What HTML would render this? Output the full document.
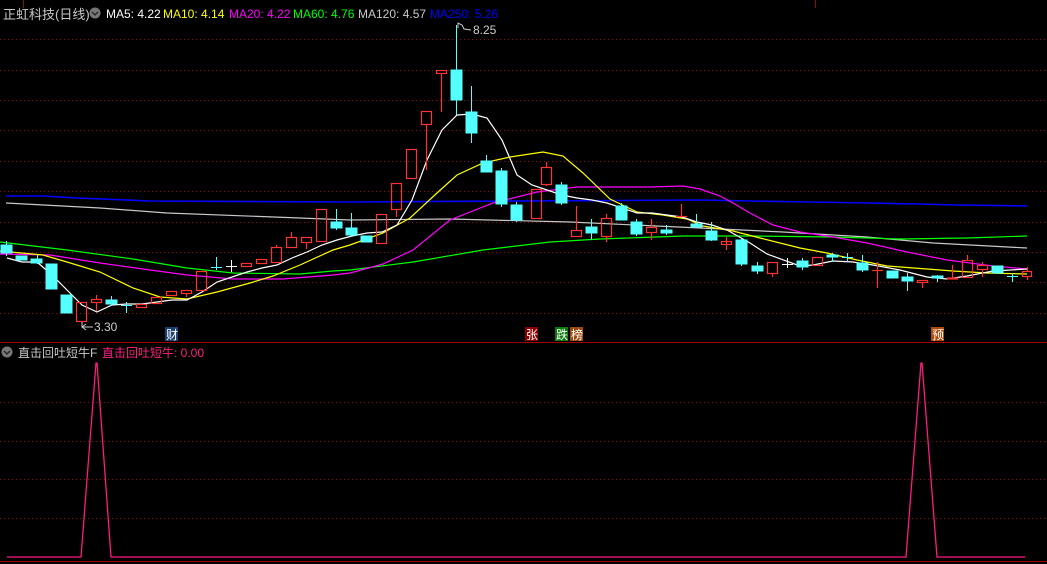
<!DOCTYPE html>
<html><head><meta charset="utf-8"><style>
html,body{margin:0;padding:0;background:#000;overflow:hidden}
svg{display:block}
text{font-family:"Liberation Sans","Noto Sans CJK SC",sans-serif}
</style></head><body>
<svg width="1047" height="564" viewBox="0 0 1047 564" xmlns="http://www.w3.org/2000/svg">
<rect width="1047" height="564" fill="#000"/>
<g stroke="#8a1010" stroke-width="1" stroke-dasharray="1,3">
<line x1="0" y1="39.5" x2="1047" y2="39.5"/>
<line x1="0" y1="70.5" x2="1047" y2="70.5"/>
<line x1="0" y1="100.5" x2="1047" y2="100.5"/>
<line x1="0" y1="130.5" x2="1047" y2="130.5"/>
<line x1="0" y1="161.5" x2="1047" y2="161.5"/>
<line x1="0" y1="191.5" x2="1047" y2="191.5"/>
<line x1="0" y1="222.5" x2="1047" y2="222.5"/>
<line x1="0" y1="252.5" x2="1047" y2="252.5"/>
<line x1="0" y1="282.5" x2="1047" y2="282.5"/>
<line x1="0" y1="313.5" x2="1047" y2="313.5"/>
<line x1="0" y1="402.5" x2="1047" y2="402.5"/>
<line x1="0" y1="441.5" x2="1047" y2="441.5"/>
<line x1="0" y1="479.5" x2="1047" y2="479.5"/>
<line x1="0" y1="518.5" x2="1047" y2="518.5"/>
</g>
<line x1="23.5" y1="0" x2="23.5" y2="8" stroke="#8a1010"/>
<line x1="815.5" y1="0" x2="815.5" y2="8" stroke="#8a1010"/>
<line x1="0" y1="342.5" x2="1047" y2="342.5" stroke="#a00000"/>
<line x1="0" y1="561.5" x2="1047" y2="561.5" stroke="#a00000"/>

<!-- MA lines -->
<g fill="none" stroke-width="1.2">
<polyline stroke="#0000ff" stroke-width="1.6" points="6,196 43,196 77,198 150,201 350,202 700,200 750,201 810,202 870,203 917,204 960,205 1027,206"/>
<polyline stroke="#c8c8c8" points="6,203 100,208 167,213 300,218 350,220 450,219 570,222 700,228 783,232 867,237 933,243 1027,248"/>
<polyline stroke="#00ff00" points="0,242 67,250 133,259 187,268 233,273 300,274 333,271 350,270 413,262 483,250 550,242 600,239 683,236 750,236 833,237 900,239 967,238 1027,236"/>
<polyline stroke="#ff00ff" points="0,254 50,255 100,263 150,270 187,275 233,279 283,279 333,275 350,273 383,264 413,250 450,220 493,203 537,192 577,187 650,187 683,186 700,189 720,196 733,203 750,213 773,225 800,232 833,237 867,243 907,252 947,260 993,266 1027,269"/>
<polyline stroke="#ffff00" points="0,251 43,255 67,262 100,272 133,288 160,297 187,299 217,292 250,283 273,276 300,265 333,250 350,245 383,233 410,218 437,193 457,175 483,163 510,157 543,152 563,156 583,173 610,199 637,212 663,215 687,219 703,226 733,231 760,238 800,248 827,253 857,260 887,266 927,269 953,271 987,273 1027,274"/>
<polyline stroke="#ffffff" points="7,258 22,262 37,262 52,275 67,290 82,305 97,312 112,305 127,304 142,304 157,302 172,300 187,300 202,292 217,282 232,277 247,272 262,268 277,265 292,258 307,252 322,245 337,240 352,236 367,233 382,232 397,225 412,200 427,160 442,130 457,115 472,114 487,118 502,140 517,175 532,185 547,190 562,195 577,198 592,200 607,203 622,208 637,213 652,213 667,215 682,217 697,222 712,225 727,230 750,243 767,254 800,266 813,265 833,261 853,262 873,265 900,270 927,277 947,279 967,276 993,271 1027,269"/>
</g>

<!-- candles: cyan filled -->
<g fill="#54ffff" stroke="#54ffff" stroke-width="1">
<line x1="6.5" y1="241" x2="6.5" y2="256"/><rect x="1" y="245" width="11" height="8"/>
<rect x="16" y="256" width="11" height="4"/>
<line x1="37.5" y1="255" x2="37.5" y2="264"/><rect x="31" y="259" width="11" height="4"/>
<rect x="46" y="264" width="11" height="25"/>
<rect x="61" y="295" width="11" height="18"/>
<line x1="111.5" y1="296" x2="111.5" y2="306"/><rect x="106" y="300" width="11" height="4"/>
<line x1="126.5" y1="302" x2="126.5" y2="313"/><line x1="121" y1="305.5" x2="132" y2="305.5"/>
<line x1="216.5" y1="257" x2="216.5" y2="270"/><line x1="211" y1="267.5" x2="222" y2="267.5"/>
<line x1="336.5" y1="209" x2="336.5" y2="230"/><rect x="331" y="222" width="11" height="6"/>
<line x1="351.5" y1="213" x2="351.5" y2="237"/><rect x="346" y="228" width="11" height="7"/>
<rect x="361" y="236" width="11" height="6"/>
<line x1="456.5" y1="25" x2="456.5" y2="115"/><rect x="451" y="70" width="11" height="30"/>
<line x1="471.5" y1="86" x2="471.5" y2="143"/><rect x="466" y="112" width="11" height="21"/>
<line x1="486.5" y1="155" x2="486.5" y2="172"/><rect x="481" y="161" width="11" height="11"/>
<line x1="501.5" y1="168" x2="501.5" y2="207"/><rect x="496" y="171" width="11" height="33"/>
<line x1="516.5" y1="202" x2="516.5" y2="222"/><rect x="511" y="205" width="11" height="15"/>
<line x1="561.5" y1="182" x2="561.5" y2="205"/><rect x="556" y="185" width="11" height="18"/>
<line x1="591.5" y1="219" x2="591.5" y2="240"/><rect x="586" y="227" width="11" height="6"/>
<line x1="621.5" y1="203" x2="621.5" y2="220"/><rect x="616" y="206" width="11" height="14"/>
<line x1="636.5" y1="219" x2="636.5" y2="236"/><rect x="631" y="222" width="11" height="12"/>
<line x1="666.5" y1="225" x2="666.5" y2="235"/><rect x="661" y="230" width="11" height="3"/>
<line x1="696.5" y1="214" x2="696.5" y2="227"/><rect x="691" y="224" width="11" height="3"/>
<line x1="711.5" y1="222" x2="711.5" y2="241"/><rect x="706" y="231" width="11" height="9"/>
<line x1="741.5" y1="238" x2="741.5" y2="266"/><rect x="736" y="240" width="11" height="24"/>
<line x1="757.5" y1="262" x2="757.5" y2="274"/><rect x="752" y="266" width="11" height="5"/>
<line x1="802.5" y1="258" x2="802.5" y2="270"/><rect x="797" y="261" width="11" height="6"/>
<line x1="832.5" y1="253" x2="832.5" y2="262"/><rect x="827" y="255" width="11" height="2"/>
<line x1="847.5" y1="253" x2="847.5" y2="262"/><line x1="842" y1="257.5" x2="853" y2="257.5"/>
<line x1="862.5" y1="255" x2="862.5" y2="272"/><rect x="857" y="263" width="11" height="7"/>
<rect x="887" y="271" width="11" height="7"/>
<line x1="907.5" y1="273" x2="907.5" y2="291"/><rect x="902" y="277" width="11" height="4"/>
<line x1="937.5" y1="275" x2="937.5" y2="282"/><rect x="932" y="276" width="11" height="2"/>
<rect x="992" y="266" width="11" height="7"/>
<line x1="1012.5" y1="273" x2="1012.5" y2="282"/><line x1="1007" y1="276.5" x2="1018" y2="276.5"/>
</g>
<!-- white crosses -->
<g stroke="#fff" stroke-width="1">
<line x1="231.5" y1="260" x2="231.5" y2="272"/><line x1="226" y1="266.5" x2="237" y2="266.5"/>
<line x1="787.5" y1="258" x2="787.5" y2="268"/><line x1="782" y1="264.5" x2="793" y2="264.5"/>
</g>
<!-- red hollow -->
<g fill="none" stroke="#ff3232" stroke-width="1.2">
<rect x="76.5" y="302.5" width="10" height="19"/>
<line x1="96.5" y1="295" x2="96.5" y2="299"/><line x1="96.5" y1="302" x2="96.5" y2="311"/><rect x="91.5" y="299.5" width="10" height="3"/>
<rect x="136.5" y="304.5" width="10" height="3"/>
<rect x="151.5" y="297.5" width="10" height="6"/>
<rect x="166.5" y="291.5" width="10" height="4"/>
<line x1="186.5" y1="293" x2="186.5" y2="297"/><rect x="181.5" y="290.5" width="10" height="3"/>
<rect x="196.5" y="271.5" width="10" height="19"/>
<rect x="241.5" y="263.5" width="10" height="3"/>
<rect x="256.5" y="259.5" width="10" height="4"/>
<line x1="276.5" y1="245" x2="276.5" y2="247"/><rect x="271.5" y="247.5" width="10" height="15"/>
<line x1="291.5" y1="232" x2="291.5" y2="237"/><rect x="286.5" y="237.5" width="10" height="10"/>
<line x1="306.5" y1="242" x2="306.5" y2="249"/><rect x="301.5" y="237.5" width="10" height="5"/>
<rect x="316.5" y="209.5" width="10" height="32"/>
<rect x="376.5" y="214.5" width="10" height="29"/>
<line x1="396.5" y1="209" x2="396.5" y2="217"/><rect x="391.5" y="183.5" width="10" height="26"/>
<rect x="406.5" y="149.5" width="10" height="29"/>
<line x1="426.5" y1="124" x2="426.5" y2="170"/><rect x="421.5" y="111.5" width="10" height="13"/>
<line x1="441.5" y1="73" x2="441.5" y2="112"/><rect x="436.5" y="70.5" width="10" height="3"/>
<rect x="531.5" y="189.5" width="10" height="29"/>
<line x1="546.5" y1="162" x2="546.5" y2="167"/><line x1="546.5" y1="184" x2="546.5" y2="186"/><rect x="541.5" y="167.5" width="10" height="17"/>
<line x1="576.5" y1="206" x2="576.5" y2="230"/><rect x="571.5" y="230.5" width="10" height="6"/>
<line x1="606.5" y1="214" x2="606.5" y2="218"/><line x1="606.5" y1="236" x2="606.5" y2="242"/><rect x="601.5" y="218.5" width="10" height="18"/>
<line x1="651.5" y1="219" x2="651.5" y2="227"/><line x1="651.5" y1="232" x2="651.5" y2="240"/><rect x="646.5" y="227.5" width="10" height="5"/>
<line x1="681.5" y1="204" x2="681.5" y2="216"/><line x1="676" y1="216.5" x2="687" y2="216.5"/>
<line x1="726.5" y1="237" x2="726.5" y2="250"/><rect x="721.5" y="241.5" width="10" height="3"/>
<line x1="772.5" y1="273" x2="772.5" y2="277"/><rect x="767.5" y="262.5" width="10" height="11"/>
<rect x="812.5" y="257.5" width="10" height="8"/>
<line x1="877.5" y1="262" x2="877.5" y2="288"/><line x1="872" y1="270.5" x2="883" y2="270.5"/>
<line x1="922.5" y1="282" x2="922.5" y2="288"/><rect x="917.5" y="280.5" width="10" height="2"/>
<line x1="952.5" y1="265" x2="952.5" y2="278"/><rect x="947.5" y="278" width="10" height="1"/>
<line x1="967.5" y1="255" x2="967.5" y2="260"/><rect x="962.5" y="260.5" width="10" height="17"/>
<line x1="982.5" y1="262" x2="982.5" y2="265"/><line x1="982.5" y1="269" x2="982.5" y2="277"/><rect x="977.5" y="265.5" width="10" height="4"/>
<line x1="1027.5" y1="267" x2="1027.5" y2="271"/><line x1="1027.5" y1="276" x2="1027.5" y2="280"/><rect x="1022.5" y="271.5" width="9" height="5"/>
</g>

<!-- labels -->
<path d="M458 28 L458 23 L462 25 L464 29 L471 30" fill="none" stroke="#ccc" stroke-width="1"/>
<text x="473" y="34" font-size="12" fill="#ccc">8.25</text>
<path d="M82 322 L82 327 L93 327 M86 324 L82 327 L86 330" fill="none" stroke="#ccc" stroke-width="1"/>
<text x="94" y="331" font-size="12" fill="#ccc">3.30</text>

<!-- badges -->
<rect x="165" y="327" width="13" height="14" fill="#1a3f70"/><text x="166" y="339" font-size="12" fill="#fff">财</text>
<rect x="525" y="327" width="13" height="14" fill="#8a0000"/><text x="526" y="339" font-size="12" fill="#fff">张</text>
<rect x="555" y="327" width="13" height="14" fill="#0a7a0a"/><text x="556" y="339" font-size="12" fill="#fff">跌</text>
<rect x="570" y="327" width="13" height="14" fill="#9a4a10"/><text x="571" y="339" font-size="12" fill="#fff">榜</text>
<rect x="931" y="327" width="13" height="14" fill="#b0480a"/><text x="932" y="339" font-size="12" fill="#fff">预</text>

<!-- header -->
<text x="3" y="19" font-size="13" fill="#c8c8c8">正虹科技(日线)</text>
<circle cx="95" cy="13" r="5.5" fill="#777"/>
<path d="M92 12 L95 15 L98 12" fill="none" stroke="#222" stroke-width="1.3"/>
<g font-size="12">
<text x="106" y="18" fill="#fff">MA5: 4.22</text>
<text x="163" y="18" fill="#ffff00">MA10: 4.14</text>
<text x="229" y="18" fill="#ff00ff">MA20: 4.22</text>
<text x="293" y="18" fill="#00ff00">MA60: 4.76</text>
<text x="358" y="18" fill="#c8c8c8">MA120: 4.57</text>
<text x="430" y="18" fill="#0000ff">MA250: 5.26</text>
</g>

<!-- lower header -->
<circle cx="7" cy="352" r="5.5" fill="#777"/>
<path d="M4 351 L7 354 L10 351" fill="none" stroke="#222" stroke-width="1.3"/>
<text x="18" y="357" font-size="12" fill="#c8c8c8">直击回吐短牛F</text>
<text x="102" y="357" font-size="12" fill="#ff1f7f">直击回吐短牛: 0.00</text>

<!-- indicator -->
<polyline fill="none" stroke="#ff1a80" stroke-width="1.3" points="7,557 81,557 96,363 97,363 111,557 906,557 921,363 922,363 937,557 1025,557"/>
</svg>
</body></html>
